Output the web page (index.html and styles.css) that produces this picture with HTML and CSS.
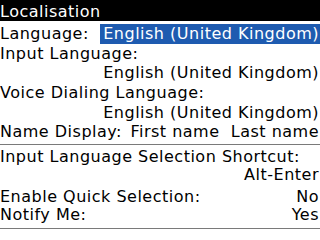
FILE: index.html
```
<!DOCTYPE html>
<html>
<head>
<meta charset="utf-8">
<link rel="stylesheet" href="styles.css">
</head>
<body>
<div class="title">Localisation</div>
<div class="top">
  <div class="row split"><span class="label">Language:</span><span class="sel">English (United Kingdom)</span></div>
  <div class="row">Input Language:</div>
  <div class="row right">English (United Kingdom)</div>
  <div class="row">Voice Dialing Language:</div>
  <div class="row right">English (United Kingdom)</div>
  <div class="row split"><span class="label">Name Display:</span><span class="val">First name&nbsp; Last name</span></div>
</div>
<div class="bottom">
  <div class="group">
    <div class="row">Input Language Selection Shortcut:</div>
    <div class="row right">Alt-Enter</div>
  </div>
  <div class="group">
    <div class="row split"><span class="label">Enable Quick Selection:</span><span class="val">No</span></div>
    <div class="row split"><span class="label">Notify Me:</span><span class="val">Yes</span></div>
  </div>
</div>
</body>
</html>
```
FILE: styles.css
```
html, body {
  margin: 0;
  padding: 0;
  background: #fff;
}
body {
  width: 320px;
  height: 240px;
  overflow: hidden;
  font-family: "DejaVu Sans", sans-serif;
  font-size: 16px;
  letter-spacing: 0.5px;
  color: #000;
}
.title {
  height: 21px;
  box-sizing: border-box;
  padding-top: 1.5px;
  line-height: 19px;
  background: #000;
  color: #fff;
  white-space: nowrap;
}
.top {
  margin-top: 3.2px;
  padding-bottom: 2px;
  border-bottom: 1px solid #7a7a7a;
}
.top .row {
  line-height: 19.6px;
  height: 19.6px;
}
.row {
  white-space: nowrap;
  padding-right: 1px;
}
.right {
  text-align: right;
}
.split {
  display: flex;
  justify-content: space-between;
}
.sel {
  background: #1e5bb0;
  color: #fff;
  padding: 0 1px 0 3px;
  margin-right: -1px;
}
.bottom {
  padding-top: 2.8px;
  border-bottom: 1px solid #7a7a7a;
}
.bottom .row {
  line-height: 18.4px;
  height: 18.4px;
}
.group + .group {
  margin-top: 3.4px;
}
.group:last-child {
  padding-bottom: 3.4px;
}
```
